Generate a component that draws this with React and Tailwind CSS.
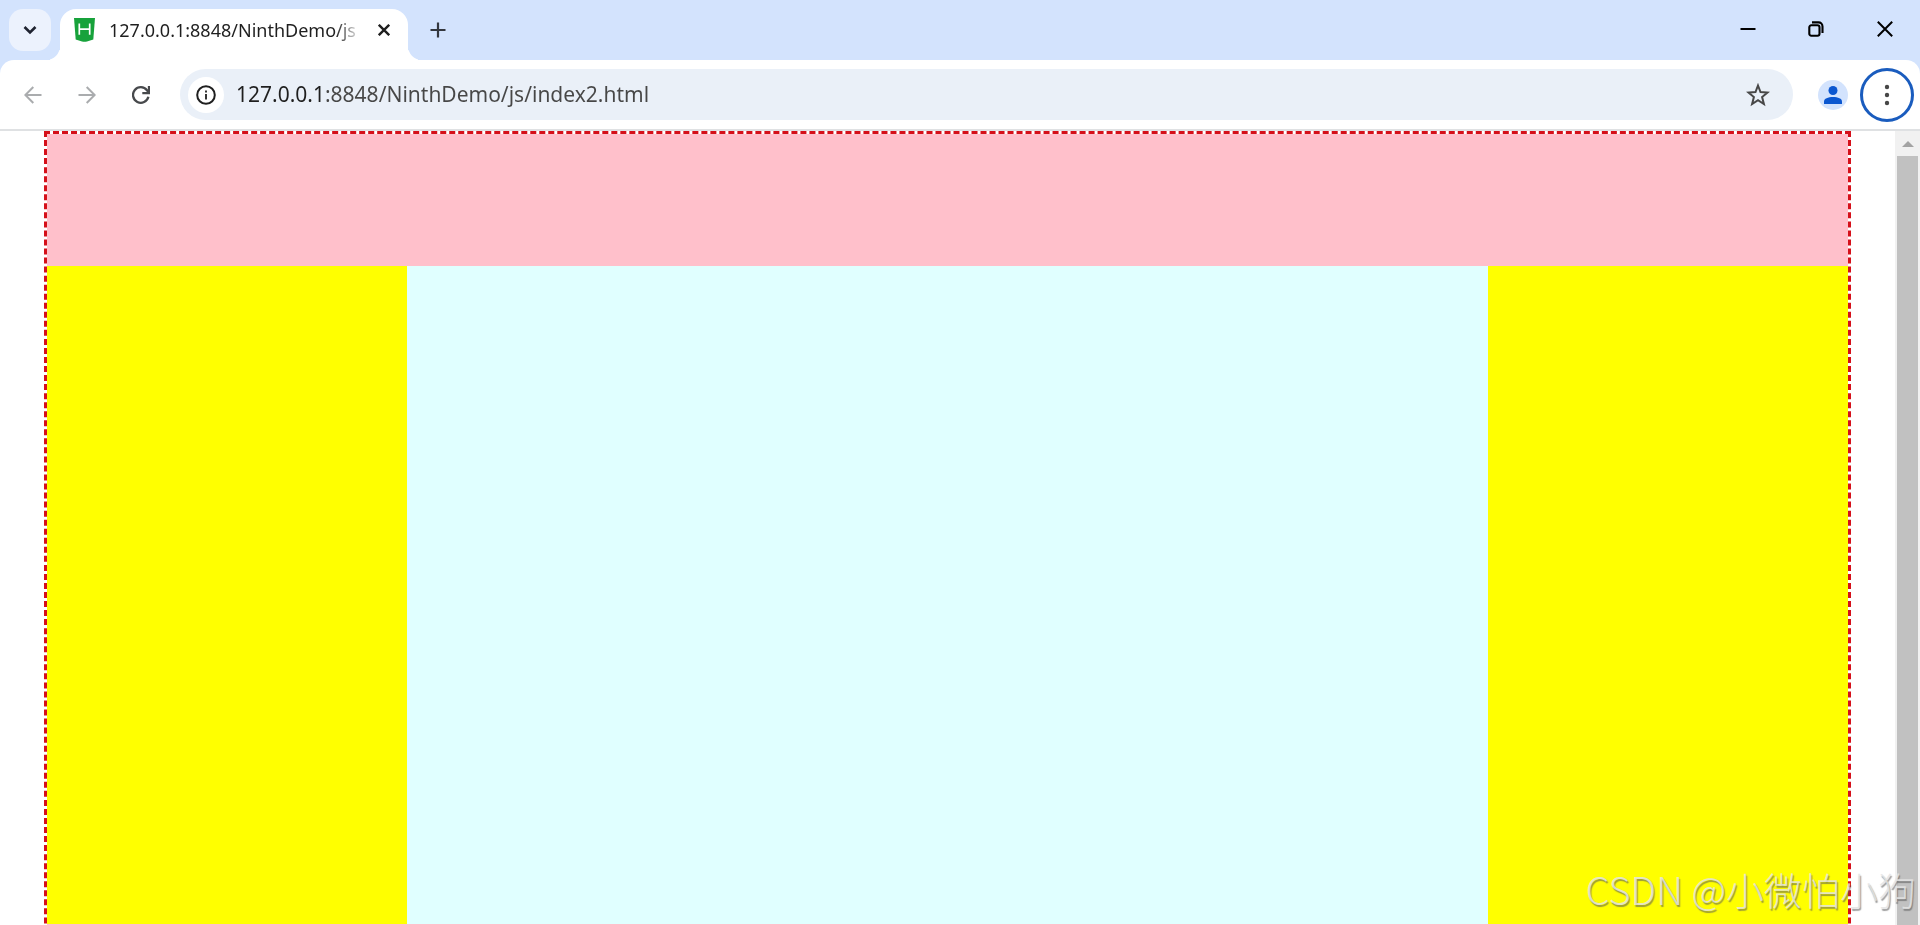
import clsx from "clsx";

const iconButton = "flex shrink-0 items-center justify-center";

const TabStrip = () => {
  return (
    <header className="flex h-[60px] items-start bg-[#d3e3fd] pl-[9px]">
      <button
        aria-label="Search tabs"
        className={clsx(iconButton, "mt-[9px] size-[42px] rounded-[14px] bg-[#ecf2fd] text-[#1f2330]")}
      >
        <svg className="size-4" viewBox="0 0 16 16" fill="none" stroke="currentColor" strokeWidth="2.6">
          <path d="M2.5 5 8 10.5 13.5 5" />
        </svg>
      </button>

      <div className="relative mt-[9px] ml-[9px] flex h-[51px] w-[348px] items-center rounded-t-2xl bg-white pr-3 pb-[9px] pl-[14px]">
        <span className="absolute right-full bottom-0 size-[14px] rounded-br-[14px] shadow-[4px_4px_0_#fff] [clip-path:inset(0)]" />
        <span className="absolute bottom-0 left-full size-[14px] rounded-bl-[14px] shadow-[-4px_4px_0_#fff] [clip-path:inset(0)]" />
        <svg className="h-6 w-[21px] shrink-0" viewBox="0 0 21 24">
          <path d="M0 0h21l-1.7 21.600-6.300 1.900q-2.500.6-5 0L1.700 21.600z" fill="#17a23b" />
          <path d="M5.300 5.500v11.300M15.700 5.500v11.300M5.300 11.200h10.400" fill="none" stroke="#fff" strokeWidth="1.700" />
        </svg>
        <span className="ml-[14px] w-[252px] overflow-hidden text-lg whitespace-nowrap text-[#1f1f1f] [mask-image:linear-gradient(to_right,#000_90%,transparent)]">
          127.0.0.1:8848/NinthDemo/js
        </span>
        <button aria-label="Close tab" className={clsx(iconButton, "ml-[11px] size-6 text-[#1f1f1f]")}>
          <svg className="size-3" viewBox="0 0 12 12" fill="none" stroke="currentColor" strokeWidth="2.400">
            <path d="M.8.8l10.400 10.400M11.200.8.8 11.200" />
          </svg>
        </button>
      </div>

      <button aria-label="New tab" className={clsx(iconButton, "mt-[9px] ml-[9px] size-[42px] text-[#33373e]")}>
        <svg className="size-4" viewBox="0 0 16 16" fill="none" stroke="currentColor" strokeWidth="2.200">
          <path d="M8 .5v15M.5 8h15" />
        </svg>
      </button>

      <div className="ml-auto flex h-[58px] text-black">
        <button aria-label="Minimize" className={clsx(iconButton, "w-[68px]")}>
          <svg className="size-4" viewBox="0 0 16 16" stroke="currentColor" strokeWidth="2">
            <path d="M.5 8h15" />
          </svg>
        </button>
        <button aria-label="Restore" className={clsx(iconButton, "w-[68px]")}>
          <svg className="size-4" viewBox="0 0 16 16" fill="none" stroke="currentColor" strokeWidth="2.100">
            <rect x="1.300" y="4.300" width="10.200" height="10.400" rx="2" />
            <path d="M4 1.400h6.500a4 4 0 0 1 4 4v6.600" />
          </svg>
        </button>
        <button aria-label="Close" className={clsx(iconButton, "w-[70px]")}>
          <svg className="size-4" viewBox="0 0 16 16" fill="none" stroke="currentColor" strokeWidth="2">
            <path d="M.8.8l14.400 14.400M15.200.8.8 15.200" />
          </svg>
        </button>
      </div>
    </header>
  );
};

const Toolbar = () => {
  return (
    <div className="bg-[#d3e3fd]">
      <nav className="flex h-[71px] items-center rounded-t-[14px] border-b-2 border-[#dfe1e3] bg-white px-[6px]">
        <button aria-label="Back" className={clsx(iconButton, "size-[54px] text-[#aaacae]")}>
          <svg className="size-[18px]" viewBox="0 0 18 18" fill="none" stroke="currentColor" strokeWidth="2">
            <path d="M17.500 9H1.500M9.300 1 1.300 9l8 8" />
          </svg>
        </button>
        <button aria-label="Forward" className={clsx(iconButton, "size-[54px] text-[#aaacae]")}>
          <svg className="size-[18px]" viewBox="0 0 18 18" fill="none" stroke="currentColor" strokeWidth="2">
            <path d="M.5 9h16M8.700 1l8 8-8 8" />
          </svg>
        </button>
        <button aria-label="Reload" className={clsx(iconButton, "size-[54px] text-[#47494c]")}>
          <svg className="size-[18px]" viewBox="0 0 18 18" fill="none" stroke="currentColor" strokeWidth="2.300">
            <path d="M16.400 10.800A7.800 7.800 0 1 1 15 4.200L16.800 6.600" />
            <path d="M17 0v7.200h-6.700" />
          </svg>
        </button>

        <div className="ml-3 flex h-[51px] flex-1 items-center rounded-full bg-[#eaf0f8] pr-[19px] pl-2">
          <button aria-label="Site information" className={clsx(iconButton, "size-9 rounded-full bg-white text-[#1f1f1f]")}>
            <svg className="size-5" viewBox="0 0 20 20" fill="none" stroke="currentColor" strokeWidth="2">
              <circle cx="10" cy="10" r="8.800" />
              <path d="M10 9v5.500M10 5.500v2" strokeWidth="1.800" />
            </svg>
          </button>
          {/* the host part of the address is darker than its path */}
          <input
            aria-label="Address"
            defaultValue="127.0.0.1:8848/NinthDemo/js/index2.html"
            className="ml-3 h-8 flex-1 bg-[linear-gradient(to_right,#1f1f1f_90px,#474747_90px)] bg-clip-text pb-[2px] text-[21px] text-transparent caret-[#1f1f1f] outline-none"
          />
          <button aria-label="Bookmark this page" className={clsx(iconButton, "size-8 text-[#474747]")}>
            <svg className="size-6" viewBox="0 0 24 24" fill="none" stroke="currentColor" strokeWidth="2">
              <path d="M12 2.500l2.500 6.500 7 .5-5.400 4.500 1.800 7L12 17.200 6.100 21l1.800-7-5.400-4.500 7-.5z" />
            </svg>
          </button>
        </div>

        <button aria-label="Profile" className={clsx(iconButton, "ml-[25px] size-[30px] rounded-full bg-[#d3e3fd] text-[#0b57d0]")}>
          <svg className="size-[18px]" viewBox="0 0 18 18" fill="currentColor">
            <circle cx="9" cy="4.500" r="4.500" />
            <path d="M0 18v-2.500C0 12.500 4 11 9 11s9 1.500 9 4.500V18z" />
          </svg>
        </button>
        <button
          aria-label="Menu"
          className={clsx(iconButton, "ml-3 size-[54px] rounded-full border-[3px] border-[#1a5cbe] text-[#474747]")}
        >
          <svg className="h-[22px] w-[6px]" viewBox="0 0 6 22" fill="currentColor">
            <circle cx="3" cy="3" r="2.200" />
            <circle cx="3" cy="11" r="2.200" />
            <circle cx="3" cy="19" r="2.200" />
          </svg>
        </button>
      </nav>
    </div>
  );
};

const Page = () => {
  return (
    <main className="min-w-0 flex-1 px-11">
      <div className="border-[3px] border-dashed border-[#d5101a]">
        <div className="h-[132px] bg-[#ffc0cb]" />
        <div className="flex h-[658px]">
          <div className="w-[360px] bg-[#ffff00]" />
          <div className="flex-1 bg-[#e0ffff]" />
          <div className="w-[360px] bg-[#ffff00]" />
        </div>
        <div className="h-[132px] bg-[#ffc0cb]" />
      </div>
    </main>
  );
};

const Scrollbar = () => {
  return (
    <div className="flex w-[25px] shrink-0 flex-col items-center bg-[#f1f1f1]">
      <div className="flex h-[25px] items-center">
        <svg className="h-[6px] w-3" viewBox="0 0 12 6" fill="#a3a3a3">
          <path d="M6 0l6 6H0z" />
        </svg>
      </div>
      <div className="w-[21px] flex-1 bg-[#c1c1c1]" />
    </div>
  );
};

export default function App() {
  return (
    <div className="relative flex h-screen flex-col overflow-hidden bg-white font-['Noto_Sans','Noto_Sans_CJK_SC',sans-serif]">
      <TabStrip />
      <Toolbar />
      <div className="flex min-h-0 flex-1 overflow-hidden">
        <Page />
        <Scrollbar />
      </div>
      <p className="absolute right-1 bottom-3 font-['Noto_Sans_CJK_SC',sans-serif] text-[38px] leading-[48px] font-light whitespace-nowrap text-[#e4e4e4]/85 [text-shadow:1px_2px_1px_rgba(90,90,90,0.6)]">
        CSDN @小微怕小狗
      </p>
    </div>
  );
}
